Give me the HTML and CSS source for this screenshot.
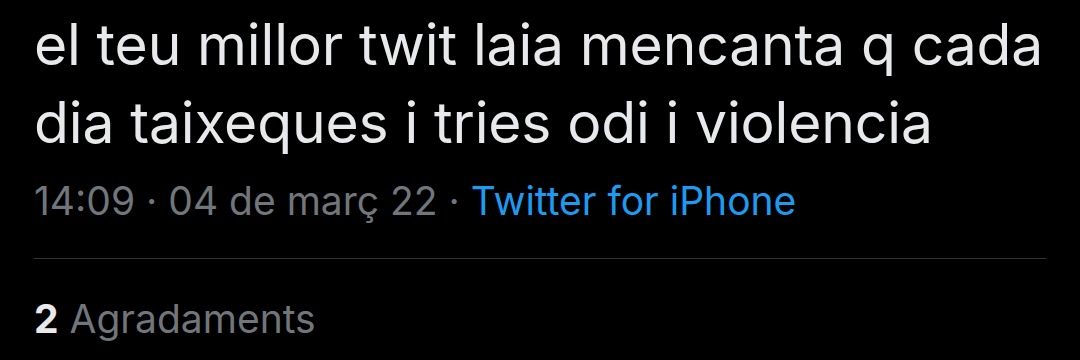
FILE: index.html
```html
<!DOCTYPE html>
<html lang="ca">
<head>
    <meta charset="UTF-8">
    <meta name="viewport" content="width=device-width, initial-scale=1.0">
    <title>Tuit</title>
    <link rel="stylesheet" href="styles.css">
</head>
<body>
    <div class="tweet">
        <p class="tweet-text">el teu millor twit laia mencanta q cada dia taixeques i tries odi i violencia</p>
        <div class="tweet-meta">
            <span>14:09</span>
            <span class="dot">·</span>
            <span>04 de març 22</span>
            <span class="dot">·</span>
            <a class="source" href="#">Twitter for iPhone</a>
        </div>
        <div class="tweet-stats">
            <span class="count">2</span> <span class="label">Agradaments</span>
        </div>
    </div>
</body>
</html>
```

FILE: styles.css
```css
/* Dark theme tweet detail */
body {
    margin: 0;
    padding: 0;
    background-color: #000;
    color: #e7e9ea;
    font-family: Inter, "Noto Sans", sans-serif;
}

.tweet {
    padding: 6px 34px 0 34px;
    width: 1012px;
}

.tweet-text {
    margin: 0;
    font-size: 57px;
    line-height: 78px;
    letter-spacing: -0.15px;
    color: #e7e9ea;
}

.tweet-meta {
    margin-top: 15px;
    font-size: 39px;
    line-height: 48px;
    color: #71767b;
    padding-bottom: 33px;
    border-bottom: 1px solid #2f3336;
}

.source {
    color: #1d9bf0;
    text-decoration: none;
}

.tweet-stats {
    padding-top: 36px;
    font-size: 39px;
    line-height: 48px;
}

.count {
    font-weight: 700;
    color: #e7e9ea;
}

.label {
    color: #71767b;
}
```
